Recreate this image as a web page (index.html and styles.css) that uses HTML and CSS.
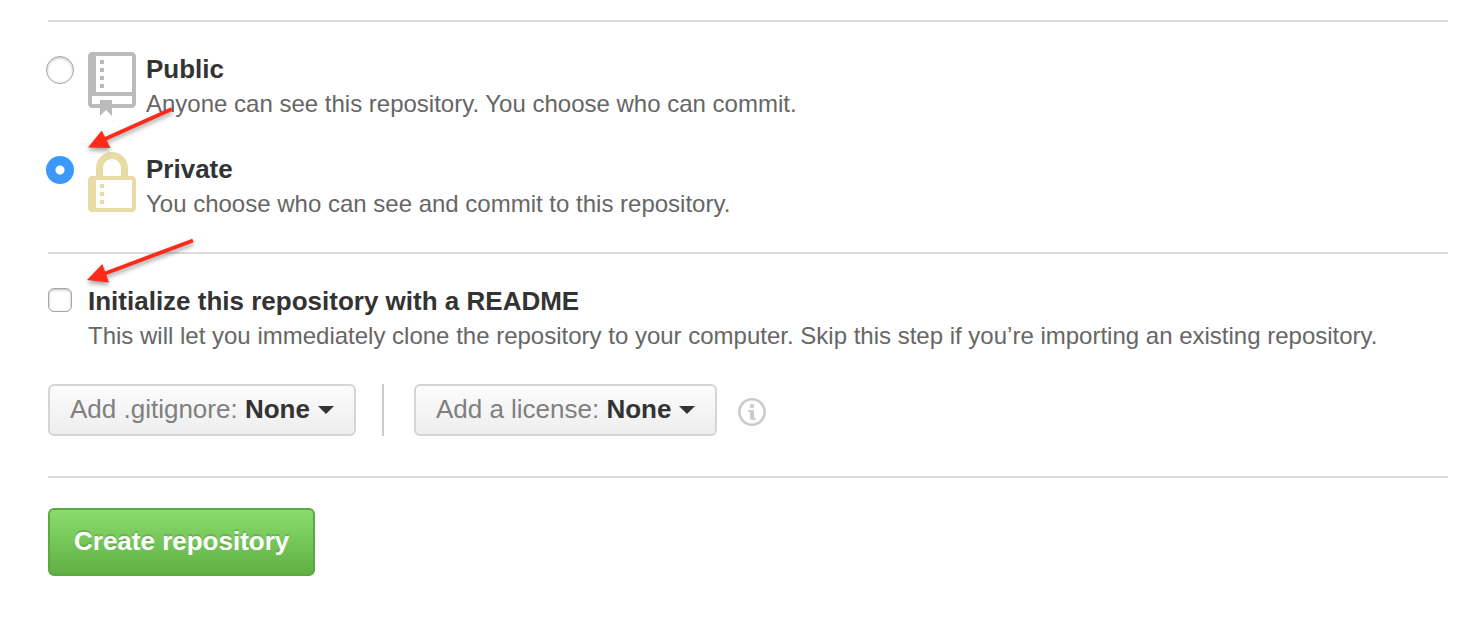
FILE: index.html
```
<!DOCTYPE html>
<html lang="en">
<head>
<meta charset="utf-8">
<title>Create a new repository</title>
<link rel="stylesheet" href="styles.css">
</head>
<body>
<form class="form">
  <fieldset class="section" aria-label="Visibility">
    <div class="option">
      <input class="radio" type="radio" name="visibility" id="public" value="public">
      <svg class="icon icon-public" viewBox="0 0 12 16" aria-hidden="true"><path fill-rule="evenodd" d="M4 9H3V8h1v1zm0-3H3v1h1V6zm0-2H3v1h1V4zm0-2H3v1h1V2zm8-1v12c0 .55-.45 1-1 1H6v2l-1.5-1.5L3 16v-2H1c-.55 0-1-.45-1-1V1c0-.55.45-1 1-1h10c.55 0 1 .45 1 1zm-1 10H1v2h2v-1h3v1h5v-2zm0-10H2v9h9V1z"/></svg>
      <div class="copy">
        <label class="title" for="public">Public</label>
        <p class="note">Anyone can see this repository. You choose who can commit.</p>
      </div>
    </div>
    <div class="option">
      <input class="radio" type="radio" name="visibility" id="private" value="private" checked>
      <svg class="icon icon-private" viewBox="0 0 12 16" aria-hidden="true"><path fill-rule="evenodd" d="M4 13H3v-1h1v1zm8-6v7c0 .55-.45 1-1 1H1c-.55 0-1-.45-1-1V7c0-.55.45-1 1-1h1V4c0-2.200 1.800-4 4-4s4 1.800 4 4v2h1c.55 0 1 .45 1 1zM3.750 6h4.500V4c0-1.250-1-2.250-2.250-2.250S3.750 2.750 3.750 4v2zM11 7H2v7h9V7zM4 8H3v1h1V8zm0 2H3v1h1v-1z"/></svg>
      <div class="copy">
        <label class="title" for="private">Private</label>
        <p class="note">You choose who can see and commit to this repository.</p>
      </div>
    </div>
  </fieldset>
  <div class="section section-init">
    <div class="init">
      <input class="checkbox" type="checkbox" id="readme">
      <div class="copy">
        <label class="title" for="readme">Initialize this repository with a README</label>
        <p class="note">This will let you immediately clone the repository to your computer. Skip this step if you’re importing an existing repository.</p>
      </div>
    </div>
    <div class="menus">
      <button class="menu" type="button" aria-haspopup="true"><span>Add .gitignore: <b>None</b></span><i class="caret"></i></button>
      <span class="divider"></span>
      <button class="menu" type="button" aria-haspopup="true"><span>Add a license: <b>None</b></span><i class="caret"></i></button>
      <a class="info" href="#" aria-label="About licenses">
        <svg viewBox="0 0 28 28" aria-hidden="true"><circle cx="14" cy="14" r="12.700" fill="none" stroke="currentColor" stroke-width="2.600"/><circle cx="14" cy="8" r="2.200" fill="currentColor"/><path fill="currentColor" d="M10.300 12H15q1 0 1 1v6q0 1 1 1h.5v2H14q-2 0-2-2v-6h-1.700z"/></svg>
      </a>
    </div>
  </div>
  <div class="section section-submit">
    <button class="submit" type="submit">Create repository</button>
  </div>
  <svg class="arrows" viewBox="0 0 220 300" aria-hidden="true">
    <path d="M172 109L105 139" /><polygon points="88,147.500 101.700,130.500 110.500,148"/>
    <path d="M193 240.500L105 273.500"/><polygon points="87,280 102.300,264 109,282.500"/>
  </svg>
</form>
</body>
</html>
```
FILE: styles.css
```
* { box-sizing: border-box; }
body {
  margin: 0;
  background: #fff;
  color: #666;
  font: 24px/34px "Liberation Sans", Arial, sans-serif;
}
.form { position: relative; padding: 20px 36px 20px 48px; }
.section {
  margin: 0;
  padding: 30px 0;
  border: 0;
  border-top: 2px solid #ddd;
}
.section-init { padding-bottom: 40px; }
.option { display: grid; grid-template-columns: 40px 58px 1fr; align-items: start; }
.option + .option { margin-top: 30px; }
.icon { width: 48px; height: 64px; fill: #bbb; }
.icon-private { fill: #e9dba5; }
.title { display: block; color: #333; font-size: 26px; font-weight: bold; }
.note { margin: 0; line-height: 36px; }
.radio, .checkbox {
  appearance: none;
  margin: 4px 0 0;
  background: #fff;
  border: 1px solid #a6a6a6;
  box-shadow: inset 0 1px 3px #bbb;
}
.radio { width: 28px; height: 28px; margin-left: -2px; border-radius: 50%; }
.radio:checked {
  border: 0;
  background: radial-gradient(circle, #fff 4px, #3b99fc 5px);
  box-shadow: none;
}
.checkbox { width: 24px; height: 24px; border-radius: 6px; }
.init { display: grid; grid-template-columns: 40px 1fr; align-items: start; }
.menus { display: flex; margin-top: 30px; }
.menu {
  display: flex;
  align-items: center;
  gap: 8px;
  height: 52px;
  padding: 0 20px 2px;
  border: 2px solid #d5d5d5;
  border-radius: 6px;
  background: linear-gradient(#fcfcfc, #eee);
  color: #808080;
  font: inherit;
  font-size: 26px;
}
.menu b { color: #333; }
.caret { border: 8px solid transparent; border-top-color: #333; border-bottom: 0; margin-top: 2px; }
.divider { width: 2px; margin: 0 30px 0 26px; background: #ccc; }
.info { width: 28px; height: 28px; margin: 14px 0 0 21px; color: #ccc; }
.info svg { display: block; }
.section-submit { padding-bottom: 0; }
.submit {
  display: block;
  height: 68px;
  padding: 0 24px 2px;
  border: 2px solid #5ca941;
  border-radius: 6px;
  background: linear-gradient(#8add6d, #60b044);
  color: #fff;
  font: bold 26px/34px "Liberation Sans", Arial, sans-serif;
  text-shadow: 0 -2px 0 rgba(0, 0, 0, 0.15);
}
.arrows {
  position: absolute;
  top: 0;
  left: 0;
  width: 220px;
  height: 300px;
  pointer-events: none;
  fill: #ff2a1a;
  filter: drop-shadow(0 3px 2px rgba(0, 0, 0, 0.35));
}
.arrows path { stroke: #ff2a1a; stroke-width: 4; }
```
